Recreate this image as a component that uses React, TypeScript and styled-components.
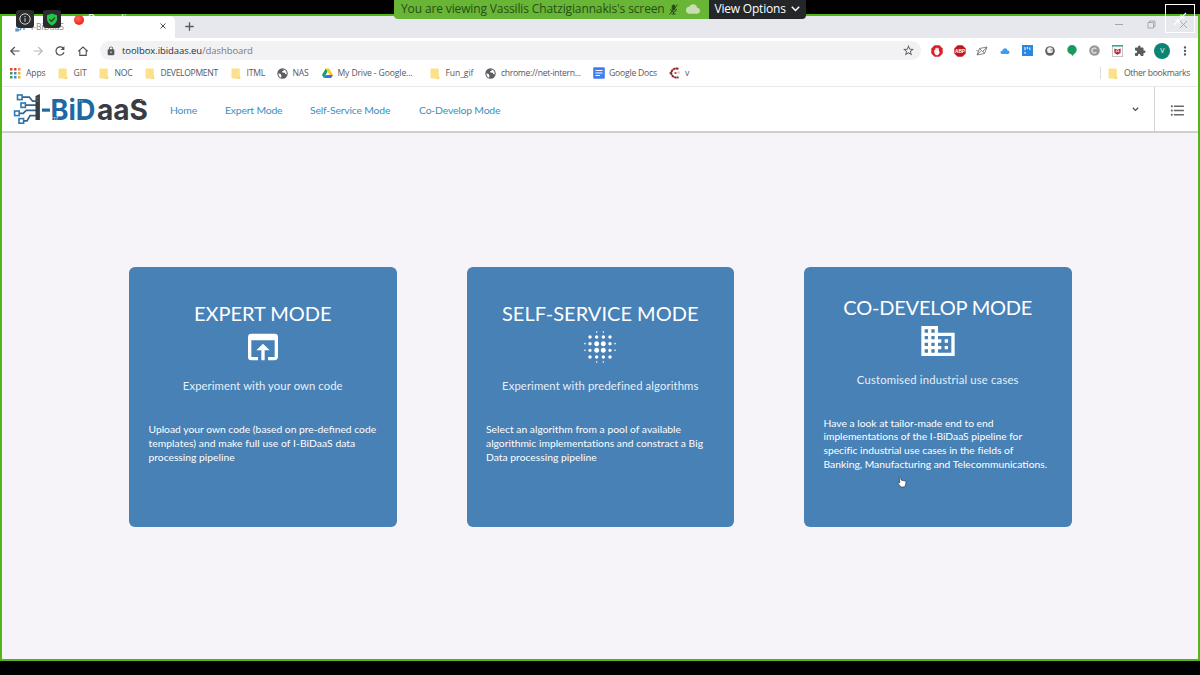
import React from "react";
import styled, { createGlobalStyle } from "styled-components";
import { MdOpenInBrowser, MdBlurOn, MdBusiness, MdPublic, MdLock, MdExtension, MdMoreVert, MdStarBorder, MdFormatListBulleted, MdCloud } from "react-icons/md";

const UI = `"Open Sans", "Noto Sans", sans-serif`;
const BODY = `Lato, "Open Sans", sans-serif`;

const Global = createGlobalStyle`
  *, *::before, *::after { box-sizing: border-box; }
  html, body { margin: 0; background: #000; overflow: hidden; }
  svg { display: block; flex: none; }
`;

const Screen = styled.div`
  position: relative;
  width: 1200px;
  height: 675px;
  padding: 14px 0;
  background: #000;
  overflow: hidden;
  font-family: ${UI};
`;

const SharedWindow = styled.div`
  display: flex;
  flex-direction: column;
  height: 647px;
  border: 2px solid #52b616;
  background: #fff;
`;

const TabStrip = styled.div`
  display: flex;
  flex: none;
  height: 22px;
  background: #e7e8ed;
`;

const Tab = styled.div`
  display: flex;
  align-items: center;
  width: 173px;
  padding: 0 9px 2px 13px;
  background: #fff;
  border-radius: 0 5px 0 0;
  color: #888;
  font-size: 8.5px;
`;

const TabTitle = styled.span`
  flex: 1;
  margin-left: 4px;
`;

const NewTab = styled.div`
  display: flex;
  align-items: center;
  padding: 0 0 2px 10px;
`;

const WindowButtons = styled.div`
  display: flex;
  align-items: center;
  gap: 23.5px;
  margin-left: auto;
  padding: 0 10px 5px 0;
`;

const Toolbar = styled.div`
  display: flex;
  flex: none;
  align-items: center;
  height: 26px;
  padding: 0 0 1px 7px;
`;

const NavButtons = styled.div`
  display: grid;
  grid-template-columns: repeat(4, 22.6px);
  width: 91px;
`;

const AddressBar = styled.div`
  display: flex;
  align-items: center;
  width: 821px;
  height: 19px;
  padding: 0 6px 0 6px;
  border-radius: 10px;
  background: #f2f2f4;
  color: #77797d;
  font-size: 9.5px;
  letter-spacing: -0.07px;
`;

const Url = styled.span`
  flex: 1;
  margin-left: 6px;
  b { font-weight: 400; color: #2d2f33; }
`;

const Extensions = styled.div`
  display: grid;
  grid-template-columns: repeat(12, 22.5px);
  margin-left: 5px;
  justify-items: center;
  align-items: center;
`;

const Avatar = styled.div`
  display: flex;
  align-items: center;
  justify-content: center;
  width: 16px;
  height: 16px;
  border-radius: 50%;
  background: #0b8573;
  color: #fff;
  font-size: 7px;
`;

const Bookmarks = styled.div`
  display: flex;
  flex: none;
  align-items: center;
  height: 23px;
  padding: 0 8px 4px 8px;
  border-bottom: 1px solid #e9e9ed;
`;

const Bookmark = styled.div<{ $width: number; $spacing: number }>`
  display: flex;
  align-items: center;
  gap: 5px;
  width: ${(p) => p.$width}px;
  color: #55585c;
  font-size: 8.6px;
  letter-spacing: ${(p) => p.$spacing}px;
  white-space: nowrap;
`;

const OtherBookmarks = styled.div`
  display: flex;
  align-items: center;
  gap: 6px;
  margin-left: auto;
  padding-left: 7px;
  height: 12px;
  border-left: 1px solid #ddd;
  color: #55585c;
  font-size: 8.6px;
  letter-spacing: -0.3px;
  white-space: nowrap;
`;

const IconSlot = styled.span`
  display: flex;
  justify-content: center;
  width: 11px;
`;

const SiteHeader = styled.header`
  display: flex;
  flex: none;
  align-items: center;
  height: 46px;
  padding-left: 11px;
  background: #fff;
  border-bottom: 2px solid #cfced2;
`;

const SiteNav = styled.nav`
  display: flex;
  flex: 1;
  gap: 28px;
  margin-left: 19px;
  padding-top: 2px;
`;

const SiteLink = styled.a<{ $width: number }>`
  width: ${(p) => p.$width}px;
  color: #3a8fbd;
  font-family: ${BODY};
  font-size: 10.4px;
  letter-spacing: -0.18px;
  line-height: 14px;
  white-space: nowrap;
`;

const SidebarToggle = styled.div`
  display: flex;
  align-items: center;
  justify-content: center;
  width: 44px;
  height: 44px;
  margin-left: 15px;
  padding: 3px 0 0 2px;
  border-left: 1px solid #d4d4d8;
  color: #66666b;
`;

const Dashboard = styled.main`
  display: flex;
  flex: 1;
  gap: 70px;
  align-items: flex-start;
  padding: 133.5px 0 0 127px;
  background: #f6f4f8;
`;

const Card = styled.section`
  display: flex;
  flex-direction: column;
  align-items: center;
  justify-content: center;
  width: 267.5px;
  height: 260.5px;
  padding: 0 19.5px;
  border-radius: 6px;
  background: #4781b6;
  color: #fff;
  font-family: ${BODY};
`;

const CardTitle = styled.h2<{ $spacing: number }>`
  margin: 0 0 2px;
  font-size: 20px;
  font-weight: 400;
  line-height: 24px;
  letter-spacing: ${(p) => p.$spacing}px;
  white-space: nowrap;
`;

const CardSubtitle = styled.p<{ $spacing: number }>`
  margin: 10px 0 28px;
  color: #e6eff8;
  font-size: 11.3px;
  line-height: 18px;
  letter-spacing: ${(p) => p.$spacing}px;
  white-space: nowrap;
`;

const CardText = styled.p`
  align-self: stretch;
  margin: 0 0 27.5px;
  font-size: 10.3px;
  line-height: 13.7px;
  white-space: nowrap;
`;

const CardLine = styled.span<{ $spacing: number }>`
  display: block;
  letter-spacing: ${(p) => p.$spacing}px;
`;

const ShareBanner = styled.div`
  position: absolute;
  top: 0;
  left: 394px;
  display: flex;
  height: 18.5px;
  border-radius: 0 0 4px 4px;
  overflow: hidden;
  font-size: 12px;
  line-height: 20px;
  white-space: nowrap;
`;

const ShareMessage = styled.div`
  display: flex;
  align-items: center;
  width: 314.5px;
  padding-left: 7px;
  background: #69b536;
  color: #255014;
  letter-spacing: -0.13px;
`;

const ShareText = styled.span`
  width: 268px;
`;

const CloudSlot = styled.span`
  margin-left: 8px;
`;

const ViewOptions = styled.div`
  display: flex;
  align-items: center;
  gap: 3px;
  width: 97.5px;
  padding-left: 6px;
  background: #242629;
  color: #fff;
  letter-spacing: -0.2px;
`;

const ViewText = styled.span`
  width: 73px;
  font-weight: 500;
`;

const MeetingStatus = styled.div`
  position: absolute;
  top: 10px;
  left: 16px;
  display: flex;
  align-items: center;
  height: 18px;
  color: #fff;
  font-size: 11px;
`;

const Badge = styled.div`
  display: flex;
  align-items: center;
  justify-content: center;
  width: 18px;
  height: 18px;
  margin-right: 9px;
  border-radius: 3px;
  background: #2a2c2e;
`;

const RecordDot = styled.div`
  width: 10px;
  height: 10px;
  margin: 1px 4px 0 4px;
  border-radius: 50%;
  background: radial-gradient(circle at 40% 35%, #ff6a55, #ee2a22 65%);
`;

const RecordLabel = styled.span`
  margin-bottom: 3px;
`;

const ExitFullscreen = styled.div`
  position: absolute;
  top: 4px;
  left: 1165px;
  width: 30px;
  height: 29px;
  border: 1px solid #fff;
  padding: 7px;
`;

const Pointer = styled.div`
  position: absolute;
  top: 476px;
  left: 897px;
`;

const Folder = () => (
  <svg width="10" height="11" viewBox="0 0 10 11">
    <path d="M.5 1.2Q.5.5 1.2.5H8q.8 0 .8.8v8.2l.7 1H1.2q-.7 0-.7-.7z" fill="#fbe18b" />
    <path d="M8.8 8v2.5h-3" fill="none" stroke="#f0cd68" strokeWidth=".7" />
  </svg>
);

const appColors = ["#d94436", "#d94436", "#e8963c", "#3b9b58", "#4c83dc", "#e3b23c", "#3b9b58", "#4c83dc", "#e3b23c"];
const AppsGrid = () => (
  <svg width="11" height="11" viewBox="0 0 11 11">
    {appColors.map((c, i) => (
      <rect key={i} x={(i % 3) * 4} y={Math.floor(i / 3) * 4} width="2.5" height="2.5" fill={c} />
    ))}
  </svg>
);

const Drive = () => (
  <svg width="11" height="10" viewBox="0 0 22 20">
    <path d="M7.5 1 0 14l3.7 6L11 7z" fill="#159f5c" />
    <path d="M7.5 1h7L22 14h-7z" fill="#fbc924" />
    <path d="M3.7 20 7.5 14H22l-3.7 6z" fill="#2f74e8" />
  </svg>
);

const Docs = () => (
  <svg width="12" height="12" viewBox="0 0 12 12">
    <rect x=".2" y=".2" width="11.6" height="11.6" rx="1.2" fill="#3f7df0" />
    <path d="M2.5 3.5h7M2.5 6h7M2.5 8.5h4.6" stroke="#fff" strokeWidth="1.2" />
  </svg>
);

const Globe = () => (
  <svg width="11" height="11" viewBox="0 0 11 11">
    <circle cx="5.5" cy="5.5" r="5.2" fill="#5a5d61" />
    <path d="M1.500 5.200 3.600 6l.8 1.500-.2 2.200Q1.400 8.800 1.500 5.200M4.500 1.500 7 1.400 6.800 2.600 5 3.400l.3 1.200 2.500.2 1 1.700 1-.6Q9.700 3 8 1.900L6.500 1.200z" fill="#fff" />
  </svg>
);

const RedMark = () => (
  <svg width="12" height="12" viewBox="0 0 12 12">
    <path d="M9.5 1.8C5 .6 2.6 3 2.2 6c.4 3.2 3 5.3 7.3 4.2" fill="none" stroke="#8d2226" strokeWidth="2" strokeDasharray="2.6 .4" />
    <path d="M.5 6h2.2M5.5 6h2" stroke="#8d2226" strokeWidth="1.3" />
    <circle cx="9.6" cy="5.6" r="1.4" fill="#ecc8c5" />
  </svg>
);

const BackArrow = ({ forward }: { forward?: boolean }) => (
  <svg width="12" height="12" viewBox="0 0 12 12" fill="none" stroke={forward ? "#b9babd" : "#4b4e52"} strokeWidth="1.2">
    <path d={forward ? "M1.5 6h8.5M6.2 2 10.2 6l-4 4" : "M10.5 6H2M5.8 2 1.8 6l4 4"} />
  </svg>
);

const Reload = () => (
  <svg width="12" height="12" viewBox="0 0 12 12" fill="none" stroke="#4b4e52" strokeWidth="1.2">
    <path d="M9.7 4A4.1 4.1 0 1 0 10 7.2" />
    <path d="M10.4 1v3.9H6.6z" fill="#4b4e52" stroke="none" />
  </svg>
);

const HomeIcon = () => (
  <svg width="12" height="12" viewBox="0 0 12 12" fill="none" stroke="#4b4e52" strokeWidth="1.1">
    <path d="M1.2 6.3 6 2l4.8 4.3M2.8 5.2v5.2h6.4V5.2" />
  </svg>
);

const LogoMark = () => (
  <svg width="138" height="38" viewBox="0 -2 138 38">
    <g fill="none" stroke="#2a7ab5" strokeWidth="1.6">
      <rect x="4.500" y="3" width="4.6" height="4.6" />
      <rect x="8" y="11" width="4.400" height="4.400" />
      <rect x="1.600" y="19" width="4.6" height="4.6" />
      <rect x="6" y="26.600" width="4.6" height="4.6" />
    </g>
    <g fill="none" stroke="#35658c" strokeWidth="1.700">
      <path d="M9.300 5.200h7l3.400 4H23M12.600 13.200H23M6.400 21.300h3.800l3-3H23M10.800 28.900H14l3-5.200h6" />
    </g>
    <path d="M22.500 4 26.900 2v26h-4.400z" fill="#3a3c42" />
    <path d="M22.600 6h3M22.600 9h3" stroke="#8b8f94" strokeWidth=".7" />
    <rect x="29" y="16.500" width="8" height="3.200" fill="#2068a3" />
    <g fontFamily="Inter, sans-serif" fontSize="29" fontWeight="700">
      <text x="37.500" y="28" fill="#2068a3" textLength="45" lengthAdjust="spacingAndGlyphs">BiD</text>
      <text x="84" y="28" fill="#3a3c42" textLength="51" lengthAdjust="spacingAndGlyphs">aaS</text>
    </g>
    <path d="M39 25.500h6M41 27h4M61 7h3M66 9h4M127 8.500h6" stroke="#fff" strokeWidth=".7" strokeDasharray="1 .7" />
  </svg>
);

const bookmarks = [
  { label: "Apps", icon: <AppsGrid />, width: 47.5, spacing: -0.15 },
  { label: "GIT", icon: <Folder />, width: 41, spacing: -0.1 },
  { label: "NOC", icon: <Folder />, width: 46, spacing: -0.2 },
  { label: "DEVELOPMENT", icon: <Folder />, width: 86, spacing: -0.33 },
  { label: "ITML", icon: <Folder />, width: 46, spacing: -0.2 },
  { label: "NAS", icon: <Globe />, width: 45, spacing: -0.15 },
  { label: "My Drive - Google...", icon: <Drive />, width: 108, spacing: -0.13 },
  { label: "Fun_gif", icon: <Folder />, width: 55.5, spacing: -0.1 },
  { label: "chrome://net-intern...", icon: <Globe />, width: 108, spacing: -0.3 },
  { label: "Google Docs", icon: <Docs />, width: 76, spacing: -0.2 },
  { label: "v", icon: <RedMark />, width: 40, spacing: 0 },
];

const links = [
  { label: "Home", width: 27 },
  { label: "Expert Mode", width: 57 },
  { label: "Self-Service Mode", width: 81 },
  { label: "Co-Develop Mode", width: 81 },
];

type Line = [string, number];
const cards: { title: Line; subtitle: Line; icon: React.ReactNode; lines: Line[] }[] = [
  {
    title: ["EXPERT MODE", -0.05],
    subtitle: ["Experiment with your own code", 0.08],
    icon: <MdOpenInBrowser size={40} />,
    lines: [
      ["Upload your own code (based on pre-defined code", 0],
      ["templates) and make full use of I-BiDaaS data", 0.07],
      ["processing pipeline", 0],
    ],
  },
  {
    title: ["SELF-SERVICE MODE", 0.02],
    subtitle: ["Experiment with predefined algorithms", 0.1],
    icon: <MdBlurOn size={40} />,
    lines: [
      ["Select an algorithm from a pool of available", 0.02],
      ["algorithmic implementations and constract a Big", 0.01],
      ["Data processing pipeline", 0.02],
    ],
  },
  {
    title: ["CO-DEVELOP MODE", -0.2],
    subtitle: ["Customised industrial use cases", 0.17],
    icon: <MdBusiness size={40} />,
    lines: [
      ["Have a look at tailor-made end to end", 0],
      ["implementations of the I-BiDaaS pipeline for", -0.03],
      ["specific industrial use cases in the fields of", -0.02],
      ["Banking, Manufacturing and Telecommunications.", 0],
    ],
  },
];

const ExtensionIcons = () => (
  <Extensions>
    <svg width="12" height="12" viewBox="0 0 12 12">
      <path d="M3.6.3h4.8l3.3 3.3v4.8l-3.3 3.3H3.6L.3 8.4V3.6z" fill="#da1f26" />
      <path d="M3.8 5v2.2Q4.2 9.6 6 9.6q1.6 0 2.3-3M4.8 6V3.3M6 6V2.7M7.2 6V3.3" fill="none" stroke="#fff" strokeWidth="1.1" />
      <path d="M4 5.5h4v2L6 9.4 4.2 7.6z" fill="#fff" />
    </svg>
    <svg width="12" height="12" viewBox="0 0 12 12">
      <path d="M3.6.3h4.8l3.3 3.3v4.8l-3.3 3.3H3.6L.3 8.4V3.6z" fill="#c1161c" />
      <text x="6" y="7.8" fontSize="4.8" fontWeight="700" fill="#fff" textAnchor="middle" fontFamily="Liberation Sans, sans-serif">ABP</text>
    </svg>
    <svg width="12" height="10" viewBox="0 0 12 10" fill="none" stroke="#77797b" strokeWidth=".9">
      <path d="M3.500 2.500 11 1 8.500 7.500 1 9zM3.500 2.500 6.500 5.500 11 1M1 9l3.800-4M8.500 7.500 6.800 5M.5 4.500l2 .8" />
    </svg>
    <svg width="10" height="8" viewBox="0 0 10 8">
      <path d="M2.4 7Q.3 7 .4 5.3.6 3.8 2.2 3.8 2.8 1.2 5 1.2q2.2.1 2.6 2.3Q9.6 3.7 9.6 5.3 9.5 7 7.8 7z" fill="#3f9df0" />
    </svg>
    <svg width="11" height="11" viewBox="0 0 11 11">
      <rect width="11" height="11" fill="#2b86e0" />
      <path d="M3 2v3.300M5.500 2v2M7.800 2.500v2.500M2 7.800h2" stroke="#d9eeff" strokeWidth="1.200" />
    </svg>
    <svg width="10" height="10" viewBox="0 0 10 10">
      <circle cx="5" cy="5" r="4.800" fill="#606366" />
      <circle cx="5" cy="4.200" r="2.900" fill="#f0f0f0" />
      <path d="M5 4.200 7.200 2.600 7.600 5z" fill="#999" />
    </svg>
    <svg width="10" height="11" viewBox="0 0 10 11">
      <circle cx="5" cy="4.8" r="4.7" fill="#169a5d" />
      <path d="M4.2 8.6h3.5L5.2 11z" fill="#169a5d" />
    </svg>
    <svg width="11" height="11" viewBox="0 0 11 11">
      <circle cx="5.5" cy="5.5" r="5.3" fill="#98999c" />
      <path d="M7.3 3.8a2.5 2.5 0 1 0 0 3.4" fill="none" stroke="#eee" strokeWidth="1.1" />
    </svg>
    <svg width="11" height="12" viewBox="0 0 11 12">
      <rect x=".4" y=".4" width="10.2" height="11.200" fill="#fff" stroke="#b4b8b8" strokeWidth=".8" />
      <path d="M0 .8h11" stroke="#36a58b" strokeWidth="1.600" />
      <path d="m2.400 3.400 3.100 1.400 3.100-1.400v4.600L5.500 9.800 2.400 8z" fill="#b61f35" />
      <path d="M4.200 7.400V5.600l1.300.7 1.300-.7v1.800" fill="none" stroke="#fff" strokeWidth=".8" />
    </svg>
    <MdExtension size={12} color="#5a5c60" />
    <Avatar>V</Avatar>
    <MdMoreVert size={14} color="#55575a" />
  </Extensions>
);

export default function App() {
  return (
    <Screen>
      <Global />
      <SharedWindow>
        <TabStrip>
          <Tab>
            <svg width="12" height="12" viewBox="0 0 12 12" fill="none" stroke="#3b83bd" strokeWidth="1.2">
              <path d="M2 2h3l2 2M1 9h2v2H1zM3 10h2l2-3M9 1v9" />
            </svg>
            <TabTitle>I-BiDaaS</TabTitle>
            <svg width="6" height="6" viewBox="0 0 6 6" stroke="#4b4e52" strokeWidth="1"><path d="m.5.5 5 5m0-5-5 5" /></svg>
          </Tab>
          <NewTab>
            <svg width="9" height="9" viewBox="0 0 9 9" stroke="#55585c" strokeWidth="1.3"><path d="M4.5.3v8.4M.3 4.5h8.4" /></svg>
          </NewTab>
          <WindowButtons>
            <svg width="9" height="9" viewBox="0 0 9 9" stroke="#a6a7ab" strokeWidth="1"><path d="M1 4.5h8" /></svg>
            <svg width="9" height="9" viewBox="0 0 9 9" fill="none" stroke="#a0a1a5" strokeWidth=".9"><path d="M1 2.5h5.5V8H1zM2.5 2.5V1H8v5.500H6.500" /></svg>
            <svg width="9" height="9" viewBox="0 0 9 9" stroke="#a0a1a5" strokeWidth=".9"><path d="m1 1 7 7m0-7L1 8" /></svg>
          </WindowButtons>
        </TabStrip>
        <Toolbar>
          <NavButtons>
            <BackArrow />
            <BackArrow forward />
            <Reload />
            <HomeIcon />
          </NavButtons>
          <AddressBar>
            <MdLock size={10} color="#55585c" />
            <Url><b>toolbox.ibidaas.eu</b>/dashboard</Url>
            <MdStarBorder size={13} color="#55585c" />
          </AddressBar>
          <ExtensionIcons />
        </Toolbar>
        <Bookmarks>
          {bookmarks.map((b) => (
            <Bookmark key={b.label} $width={b.width} $spacing={b.spacing}>
              <IconSlot>{b.icon}</IconSlot>
              {b.label}
            </Bookmark>
          ))}
          <OtherBookmarks>
            <Folder />
            Other bookmarks
          </OtherBookmarks>
        </Bookmarks>
        <SiteHeader>
          <LogoMark />
          <SiteNav>
            {links.map((l) => (
              <SiteLink key={l.label} $width={l.width}>{l.label}</SiteLink>
            ))}
          </SiteNav>
          <svg width="7" height="5" viewBox="0 0 7 5" fill="none" stroke="#4a4a50" strokeWidth="1.2"><path d="m.8.8 2.700 2.600L6.200.8" /></svg>
          <SidebarToggle><MdFormatListBulleted size={17} /></SidebarToggle>
        </SiteHeader>
        <Dashboard>
          {cards.map((c) => (
            <Card key={c.title[0]}>
              <CardTitle $spacing={c.title[1]}>{c.title[0]}</CardTitle>
              {c.icon}
              <CardSubtitle $spacing={c.subtitle[1]}>{c.subtitle[0]}</CardSubtitle>
              <CardText>
                {c.lines.map(([text, spacing]) => (
                  <CardLine key={text} $spacing={spacing}>{text}</CardLine>
                ))}
              </CardText>
            </Card>
          ))}
        </Dashboard>
      </SharedWindow>

      <ShareBanner>
        <ShareMessage>
          <ShareText>You are viewing Vassilis Chatzigiannakis's screen</ShareText>
          <svg width="9" height="11" viewBox="0 0 9 11" fill="none" stroke="#2c4a1c" strokeWidth="1">
            <rect x="3.200" y="1" width="2.800" height="5" rx="1.400" fill="#2c4a1c" />
            <path d="M1.500 5q.5 3 3 3t3-3M4.500 8v2M2.500 10h4M8.500.5l-8 10" />
          </svg>
          <CloudSlot><MdCloud size={14} color="#c9dcb4" /></CloudSlot>
        </ShareMessage>
        <ViewOptions>
          <ViewText>View Options</ViewText>
          <svg width="9" height="6" viewBox="0 0 9 6" fill="none" stroke="#fff" strokeWidth="1.500"><path d="m.8.8 3.700 3.700L8.200.8" /></svg>
        </ViewOptions>
      </ShareBanner>

      <MeetingStatus>
        <Badge>
          <svg width="12" height="12" viewBox="0 0 12 12" fill="none" stroke="#d6d7d8" strokeWidth="1"><circle cx="6" cy="6" r="5.200" /><path d="M6 5.200v3.600M6 3v1.200" /></svg>
        </Badge>
        <Badge>
          <svg width="12" height="13" viewBox="0 0 12 13"><path d="M6 .5 11 2.300v4Q10.800 10 6 12.500 1.200 10 1 6.300v-4z" fill="#22c745" /><path d="m3.500 6.300 2 2 3.300-3.600" fill="none" stroke="#24332a" strokeWidth="1.200" /></svg>
        </Badge>
        <RecordDot />
        <RecordLabel>Recording</RecordLabel>
      </MeetingStatus>

      <ExitFullscreen>
        <svg width="14" height="14" viewBox="0 0 14 14" fill="none" stroke="#fff" strokeWidth="1.100"><path d="M13 1 8 6M8 2.500V6h3.500M1 13l5-5M2.500 8H6v3.500" /></svg>
      </ExitFullscreen>

      <Pointer>
        <svg width="10" height="12" viewBox="0 0 10 12">
          <path d="M2.200 1.200q1-.7 1.400.3L4.200 4l4 1q1 .4.800 1.600L8.200 10q-.3 1-1.200 1H4.500q-.8 0-1.300-.8L1 7.200q-.2-1 .8-.9l1 .6z" fill="#fff" stroke="#2d3945" strokeWidth=".7" />
        </svg>
      </Pointer>
    </Screen>
  );
}
